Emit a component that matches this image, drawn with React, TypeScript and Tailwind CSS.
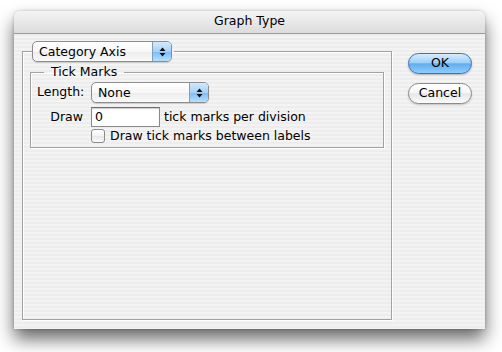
function Arrows() {
  return (
    <svg width="7" height="10" viewBox="0 0 7 10" className="block">
      <path d="M3.5 0.5 L6.5 4 L0.5 4 Z" fill="#111" />
      <path d="M3.5 9.5 L6.5 6 L0.5 6 Z" fill="#111" />
    </svg>
  )
}

function Popup({ label, width }: { label: string; width: string }) {
  return (
    <div
      className={`${width} flex h-[21px] items-stretch overflow-hidden rounded-[5px] border border-[#8d8d8d] bg-[linear-gradient(to_bottom,#ffffff,#f7f7f7_50%,#ececec_51%,#fafafa)] shadow-[0_1px_1px_rgba(0,0,0,0.15)]`}
    >
      <span className="flex flex-1 items-center pl-[6px] pt-[1px] leading-none">{label}</span>
      <span className="flex w-[19px] items-center justify-center border-l border-[#7f9dbd] bg-[linear-gradient(to_bottom,#d3e9fc,#a6d2f7_50%,#7dbcf2_51%,#b4e0ff)]">
        <Arrows />
      </span>
    </div>
  )
}

export default function App() {
  return (
    <div className="h-[352px] w-[502px] bg-white pl-[14px] pt-[11px] font-['DejaVu_Sans',sans-serif] text-[12.5px] text-black">
      <div className="flex h-[318px] w-[471px] flex-col rounded-t-[6px] shadow-[0_10px_18px_rgba(0,0,0,0.6),0_0_3px_rgba(0,0,0,0.25)]">
        <div className="flex h-[23px] items-center justify-center rounded-t-[6px] border-b border-[#9c9c9c] bg-[linear-gradient(to_bottom,#f4f4f4,#dcdcdc)] pb-[1px]">
          Graph Type
        </div>

        <div className="flex flex-1 gap-[16px] bg-[repeating-linear-gradient(to_bottom,#ededed_0px,#ededed_2px,#f3f3f3_2px,#f3f3f3_4px)] pb-[9px] pl-[8px] pt-[7px]">
          <fieldset className="h-full w-[370px] border border-[#a2a2a2] pl-[7px] pr-[7px] pt-[2px] shadow-[inset_1px_1px_0_#fff,1px_1px_0_#fff]">
            <legend className="ml-[2px] pr-[2px]">
              <Popup label="Category Axis" width="w-[140px]" />
            </legend>

            <fieldset className="border border-[#a2a2a2] pb-[3px] pl-[6px] pt-[2px] shadow-[inset_1px_1px_0_#fff,1px_1px_0_#fff]">
              <legend className="ml-[7px] px-[7px] leading-[16px]">Tick Marks</legend>
              <div className="grid grid-cols-[46px_1fr] items-center gap-x-[8px] gap-y-[4px]">
                <span className="text-right">Length:</span>
                <Popup label="None" width="w-[118px]" />

                <span className="text-right">Draw</span>
                <div className="flex items-center gap-[4px]">
                  <div className="flex h-[20px] w-[69px] items-center border border-[#8a8a8a] border-t-[#6f6f6f] bg-white pl-[3px] shadow-[inset_0_1px_1px_rgba(0,0,0,0.2)]">
                    0
                  </div>
                  <span>tick marks per division</span>
                </div>

                <span />
                <div className="-mt-[3px] flex h-[16px] items-center gap-[5px]">
                  <span className="h-[14px] w-[14px] rounded-[3px] border border-[#8a8a8a] bg-[linear-gradient(to_bottom,#ffffff,#f2f2f2_50%,#e6e6e6_51%,#fbfbfb)]" />
                  <span>Draw tick marks between labels</span>
                </div>
              </div>
            </fieldset>
          </fieldset>

          <div className="mt-[12px] flex w-[64px] flex-col gap-[9px]">
            <button className="flex h-[21px] items-center justify-center rounded-full border border-[#3d72ad] bg-[linear-gradient(to_bottom,#d6ecfd,#9fd0f8_45%,#62adef_52%,#8ccdff)] shadow-[0_1px_2px_rgba(0,0,0,0.25)]">
              OK
            </button>
            <button className="flex h-[21px] items-center justify-center rounded-full border border-[#8a8a8a] bg-[linear-gradient(to_bottom,#ffffff,#f6f6f6_45%,#e6e6e6_52%,#fbfbfb)] shadow-[0_1px_2px_rgba(0,0,0,0.2)]">
              Cancel
            </button>
          </div>
        </div>
      </div>
    </div>
  )
}
